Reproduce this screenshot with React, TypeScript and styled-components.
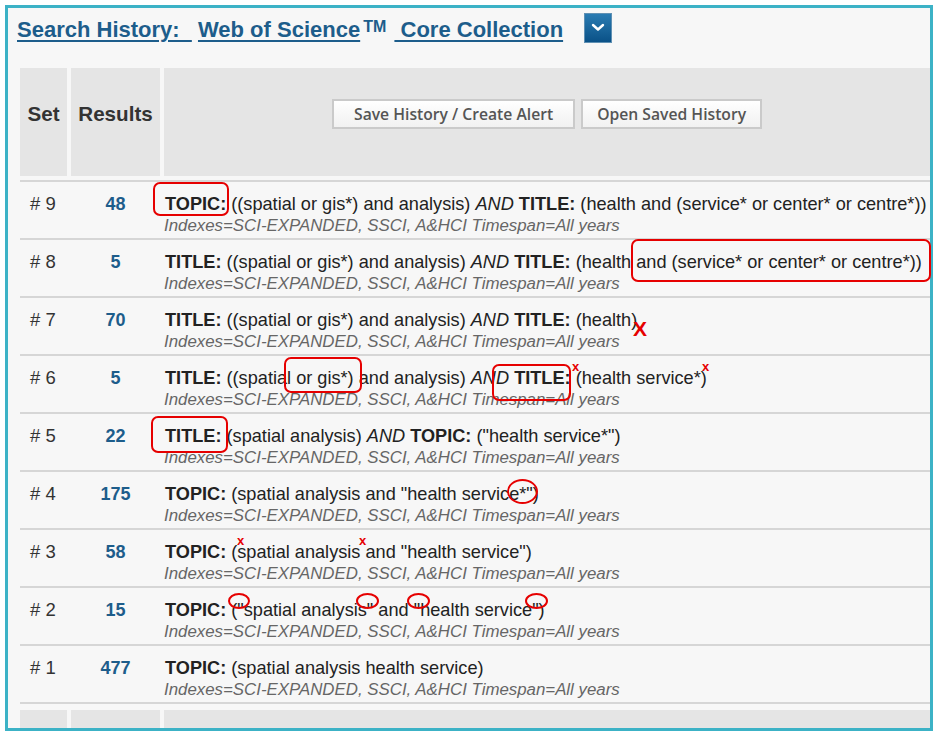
import React from "react";
import styled, { createGlobalStyle } from "styled-components";

const GlobalStyle = createGlobalStyle`
  html, body {
    margin: 0;
    padding: 0;
    background: #fff;
  }
  body {
    font-family: "Liberation Sans", Arial, sans-serif;
  }
`;

const Frame = styled.div`
  position: relative;
  box-sizing: border-box;
  margin: 5px 5px 0 5px;
  height: 726px;
  border: 3px solid #3cb2c6;
  background: #f7f7f7;
  overflow: visible;
`;

const TitleBar = styled.div`
  display: flex;
  align-items: center;
  height: 40px;
  padding: 2px 0 0 9px;
  white-space: pre;
`;

const TitleLink = styled.a`
  font-size: 22px;
  font-weight: bold;
  color: #1d5d8b;
  text-decoration: underline;
  text-decoration-thickness: 2px;
  text-underline-offset: 3px;
  cursor: pointer;
`;

const Gap = styled.span`
  font-size: 22px;
`;

const Trademark = styled.sup`
  font-size: 16px;
  font-weight: bold;
  color: #1d5d8b;
  position: relative;
  top: -3px;
  margin-left: 3px;
  margin-right: 2px;
`;

const DropButton = styled.button`
  display: flex;
  align-items: center;
  justify-content: center;
  width: 28px;
  height: 30px;
  margin: 0 0 5px 21px;
  padding: 0;
  border: 1px solid #5f90b3;
  background: linear-gradient(#2a7bb2, #0a5187);
  cursor: pointer;
`;

const TableClip = styled.div`
  margin: 18px 0 0 12px;
  overflow: hidden;
`;

const Grid = styled.div`
  display: grid;
  grid-template-columns: 47px 89px 1fr;
  column-gap: 4px;
`;

const HeadCell = styled.div<{ $last?: boolean }>`
  box-sizing: border-box;
  height: 108px;
  padding-bottom: 17px;
  background: #e5e5e5;
  display: flex;
  align-items: center;
  justify-content: ${(p) => (p.$last ? "flex-start" : "center")};
  padding-left: ${(p) => (p.$last ? "168px" : "0")};
  font-size: 20.6px;
  font-weight: bold;
  color: #333;
  gap: 6px;
`;

const FootCell = styled.div`
  height: 18px;
  background: #e5e5e5;
`;

const ToolButton = styled.button<{ $pad: number }>`
  height: 30px;
  padding: 0 ${(p) => p.$pad}px;
  border: 2px solid #cacaca;
  background: linear-gradient(#ffffff, #f1f1f1);
  font-family: "Open Sans", "DejaVu Sans", sans-serif;
  font-weight: 600;
  font-size: 15.7px;
  color: #555;
  cursor: pointer;
`;

const Body = styled.div`
  margin-top: 4px;
  border-top: 2px solid #d6d6d6;
  margin-bottom: 6px;
`;

const Row = styled.div`
  display: grid;
  grid-template-columns: 47px 89px 1fr;
  column-gap: 4px;
  padding: 11px 0 1px 0;
  border-bottom: 2px solid #d6d6d6;
  white-space: nowrap;
`;

const SetNo = styled.div`
  font-size: 18.5px;
  line-height: 22px;
  color: #333;
  padding-left: 10px;
`;

const Count = styled.a`
  font-size: 18px;
  line-height: 22px;
  font-weight: bold;
  color: #1d5d8b;
  text-align: center;
`;

const Query = styled.div`
  font-size: 18.17px;
  line-height: 22px;
  color: #222;
  padding-left: 1px;
`;

const Field = styled.b`
  color: #222;
`;

const Op = styled.i``;

const Plain = styled.span`
  white-space: pre;
`;

const Meta = styled.div`
  font-size: 16.85px;
  line-height: 22px;
  font-style: italic;
  color: #666;
`;

const Mark = styled.div<{ $round?: boolean }>`
  position: absolute;
  box-sizing: border-box;
  border: 2.5px solid #e60000;
  border-radius: ${(p) => (p.$round ? "50%" : "7px")};
  pointer-events: none;
`;

const Cross = styled.span<{ $big?: boolean }>`
  position: absolute;
  font-family: "Liberation Sans", Arial, sans-serif;
  font-weight: bold;
  color: #e60000;
  font-size: ${(p) => (p.$big ? "21px" : "13px")};
  line-height: 1;
  pointer-events: none;
`;

type Part = { t: string; k?: "b" | "i" };

const rows: { set: number; count: number; parts: Part[] }[] = [
  {
    set: 9,
    count: 48,
    parts: [
      { t: "TOPIC:", k: "b" },
      { t: " ((spatial or gis*) and analysis) " },
      { t: "AND", k: "i" },
      { t: " " },
      { t: "TITLE:", k: "b" },
      { t: " (health and (service* or center* or centre*))" },
    ],
  },
  {
    set: 8,
    count: 5,
    parts: [
      { t: "TITLE:", k: "b" },
      { t: " ((spatial or gis*) and analysis) " },
      { t: "AND", k: "i" },
      { t: " " },
      { t: "TITLE:", k: "b" },
      { t: " (health and (service* or center* or centre*))" },
    ],
  },
  {
    set: 7,
    count: 70,
    parts: [
      { t: "TITLE:", k: "b" },
      { t: " ((spatial or gis*) and analysis) " },
      { t: "AND", k: "i" },
      { t: " " },
      { t: "TITLE:", k: "b" },
      { t: " (health)" },
    ],
  },
  {
    set: 6,
    count: 5,
    parts: [
      { t: "TITLE:", k: "b" },
      { t: " ((spatial or gis*) and analysis) " },
      { t: "AND", k: "i" },
      { t: " " },
      { t: "TITLE:", k: "b" },
      { t: " (health service*)" },
    ],
  },
  {
    set: 5,
    count: 22,
    parts: [
      { t: "TITLE:", k: "b" },
      { t: " (spatial analysis) " },
      { t: "AND", k: "i" },
      { t: " " },
      { t: "TOPIC:", k: "b" },
      { t: ' ("health service*")' },
    ],
  },
  {
    set: 4,
    count: 175,
    parts: [{ t: "TOPIC:", k: "b" }, { t: ' (spatial analysis and "health service*")' }],
  },
  {
    set: 3,
    count: 58,
    parts: [{ t: "TOPIC:", k: "b" }, { t: ' (spatial analysis and "health service")' }],
  },
  {
    set: 2,
    count: 15,
    parts: [{ t: "TOPIC:", k: "b" }, { t: ' ("spatial analysis" and "health service")' }],
  },
  {
    set: 1,
    count: 477,
    parts: [{ t: "TOPIC:", k: "b" }, { t: " (spatial analysis health service)" }],
  },
];

// hand-drawn review marks, page coords minus the frame origin (8,8)
const boxes = [
  { x: 145, y: 174, w: 76, h: 34 },
  { x: 623, y: 231, w: 300, h: 43 },
  { x: 276, y: 349, w: 78, h: 36 },
  { x: 484, y: 356, w: 79, h: 37 },
  { x: 143, y: 408, w: 77, h: 37 },
];
const rings = [
  { x: 499, y: 471, w: 31, h: 25 },
  { x: 220, y: 585, w: 22, h: 16 },
  { x: 348, y: 585, w: 23, h: 16 },
  { x: 399, y: 585, w: 23, h: 16 },
  { x: 517, y: 585, w: 23, h: 16 },
];
const crosses = [
  { x: 625, y: 310, big: true },
  { x: 564, y: 352 },
  { x: 694, y: 352 },
  { x: 229, y: 526 },
  { x: 351, y: 526 },
];

const META = "Indexes=SCI-EXPANDED, SSCI, A&HCI Timespan=All years";

export default function App() {
  return (
    <>
      <GlobalStyle />
      <Frame>
        <TitleBar>
          <TitleLink>Search History:  </TitleLink>
          <Gap> </Gap>
          <TitleLink>Web of Science</TitleLink>
          <Trademark>TM</Trademark>
          <Gap> </Gap>
          <TitleLink> Core Collection</TitleLink>
          <DropButton aria-label="more">
            <svg width="14" height="9" viewBox="0 0 14 9">
              <path d="M2 2 L7 6.5 L12 2" fill="none" stroke="#fff" strokeWidth="2.4" strokeLinecap="round" strokeLinejoin="round" />
            </svg>
          </DropButton>
        </TitleBar>

        <TableClip>
          <Grid>
            <HeadCell>Set</HeadCell>
            <HeadCell>Results</HeadCell>
            <HeadCell $last>
              <ToolButton $pad={20}>Save History / Create Alert</ToolButton>
              <ToolButton $pad={14}>Open Saved History</ToolButton>
            </HeadCell>
          </Grid>

          <Body>
            {rows.map((r) => (
              <Row key={r.set}>
                <SetNo># {r.set}</SetNo>
                <Count>{r.count}</Count>
                <div>
                  <Query>
                    {r.parts.map((p, i) =>
                      p.k === "b" ? (
                        <Field key={i}>{p.t}</Field>
                      ) : p.k === "i" ? (
                        <Op key={i}>{p.t}</Op>
                      ) : (
                        <Plain key={i}>{p.t}</Plain>
                      )
                    )}
                  </Query>
                  <Meta>{META}</Meta>
                </div>
              </Row>
            ))}
          </Body>

          <Grid>
            <FootCell />
            <FootCell />
            <FootCell />
          </Grid>
        </TableClip>

        {boxes.map((b, i) => (
          <Mark key={"b" + i} style={{ left: b.x, top: b.y, width: b.w, height: b.h }} />
        ))}
        {rings.map((b, i) => (
          <Mark key={"r" + i} $round style={{ left: b.x, top: b.y, width: b.w, height: b.h }} />
        ))}
        {crosses.map((c, i) => (
          <Cross key={"c" + i} $big={c.big} style={{ left: c.x, top: c.y }}>
            {c.big ? "X" : "x"}
          </Cross>
        ))}
      </Frame>
    </>
  );
}
